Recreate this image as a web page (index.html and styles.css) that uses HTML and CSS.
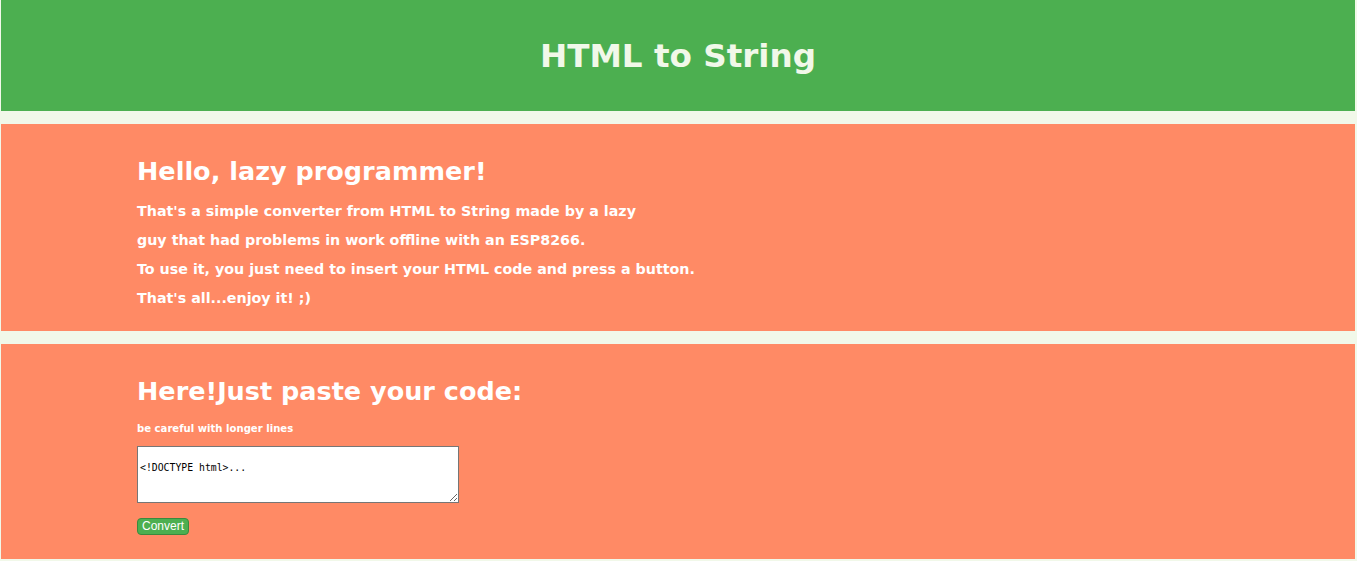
FILE: index.html
```html
<!DOCTYPE html>
<html>
<head>
<meta charset="utf-8">
<title>HTML to String</title>
<link rel="stylesheet" href="styles.css">
</head>
<body>
<header class="top">
  <h1 class="title">HTML to String</h1>
</header>
<section class="panel intro">
  <h2 class="heading">Hello, lazy programmer!</h2>
  <p class="line">That's a simple converter from HTML to String made by a lazy</p>
  <p class="line">guy that had problems in work offline with an ESP8266.</p>
  <p class="line">To use it, you just need to insert your HTML code and press a button.</p>
  <p class="line">That's all...enjoy it! ;)</p>
</section>
<section class="panel tool">
  <h2 class="heading">Here!Just paste your code:</h2>
  <p class="note">be careful with longer lines</p>
  <textarea class="code">

&lt;!DOCTYPE html&gt;...</textarea>
  <button class="convert">Convert</button>
</section>
</body>
</html>
```
FILE: styles.css
```css
html, body {
  margin: 0;
  padding: 0;
}
body {
  background: #f1f8e9;
  font-family: "DejaVu Sans", Verdana, sans-serif;
  padding: 0 2px 0 1px;
}
.top {
  background: #4caf50;
  height: 111px;
  display: flex;
  align-items: center;
  justify-content: center;
}
.title {
  margin: 0;
  color: #f1f8e9;
  font-size: 32.6px;
  font-weight: bold;
  padding-top: 1px;
}
.panel {
  background: #ff8a65;
  color: #ffffff;
  margin-top: 13px;
  padding-left: 136px;
}
.intro {
  height: 207px;
  padding-top: 1px;
  box-sizing: border-box;
}
.tool {
  height: 215px;
  box-sizing: border-box;
  padding-top: 1px;
}
.heading {
  font-size: 25.5px;
  font-weight: bold;
  margin: 0;
}
.intro .heading {
  margin-top: 31px;
  margin-bottom: 11px;
}
.line {
  margin: 0;
  font-size: 14.27px;
  font-weight: bold;
  line-height: 29px;
}
.tool .heading {
  margin-top: 31px;
}
.note {
  font-size: 10.1px;
  font-weight: bold;
  margin: 17px 0 12px;
}
.code {
  display: block;
  width: 322px;
  height: 57px;
  box-sizing: border-box;
  border: 1px solid #767676;
  font-family: "DejaVu Sans Mono", monospace;
  font-size: 9.8px;
  line-height: 11px;
  padding: 4px 2px 2px;
  margin: 0;
  resize: both;
}
.convert {
  display: block;
  margin-top: 15px;
  background: #4caf50;
  color: #ffffff;
  font-family: "Liberation Sans", Arial, sans-serif;
  font-size: 12px;
  border: 1px solid #3b8a3e;
  border-radius: 4px;
  padding: 0 4px;
  height: 17px;
  line-height: 15px;
}
```
